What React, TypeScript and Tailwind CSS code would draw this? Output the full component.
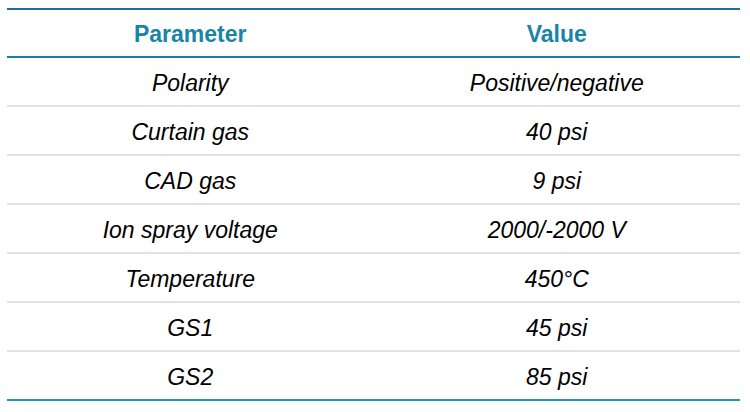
const rows: [string, string][] = [
  ["Polarity", "Positive/negative"],
  ["Curtain gas", "40 psi"],
  ["CAD gas", "9 psi"],
  ["Ion spray voltage", "2000/-2000 V"],
  ["Temperature", "450°C"],
  ["GS1", "45 psi"],
  ["GS2", "85 psi"],
];

export default function App() {
  return (
    <div className="w-[750px] h-[412px] bg-white pt-[8px] pl-[7px] font-['Liberation_Sans',Arial,sans-serif]">
      <table className="w-[733px] border-collapse table-fixed">
        <thead>
          <tr className="border-t-2 border-t-[#1b6f98] border-b-2 border-b-[#1c7aa3]">
            <th className="h-[48px] p-0 pt-[3px] text-[23px] font-bold text-[#1a84a8] text-center">Parameter</th>
            <th className="h-[48px] p-0 pt-[3px] text-[23px] font-bold text-[#1a84a8] text-center">Value</th>
          </tr>
        </thead>
        <tbody>
          {rows.map(([p, v], i) => (
            <tr
              key={p}
              className={
                i === rows.length - 1
                  ? "border-b-2 border-b-[#2596bb]"
                  : "border-b-2 border-b-[#e2e2e2]"
              }
            >
              <td className="h-[49px] p-0 pt-[4px] text-[23px] italic text-black text-center">{p}</td>
              <td className="h-[49px] p-0 pt-[4px] text-[23px] italic text-black text-center">{v}</td>
            </tr>
          ))}
        </tbody>
      </table>
    </div>
  );
}
